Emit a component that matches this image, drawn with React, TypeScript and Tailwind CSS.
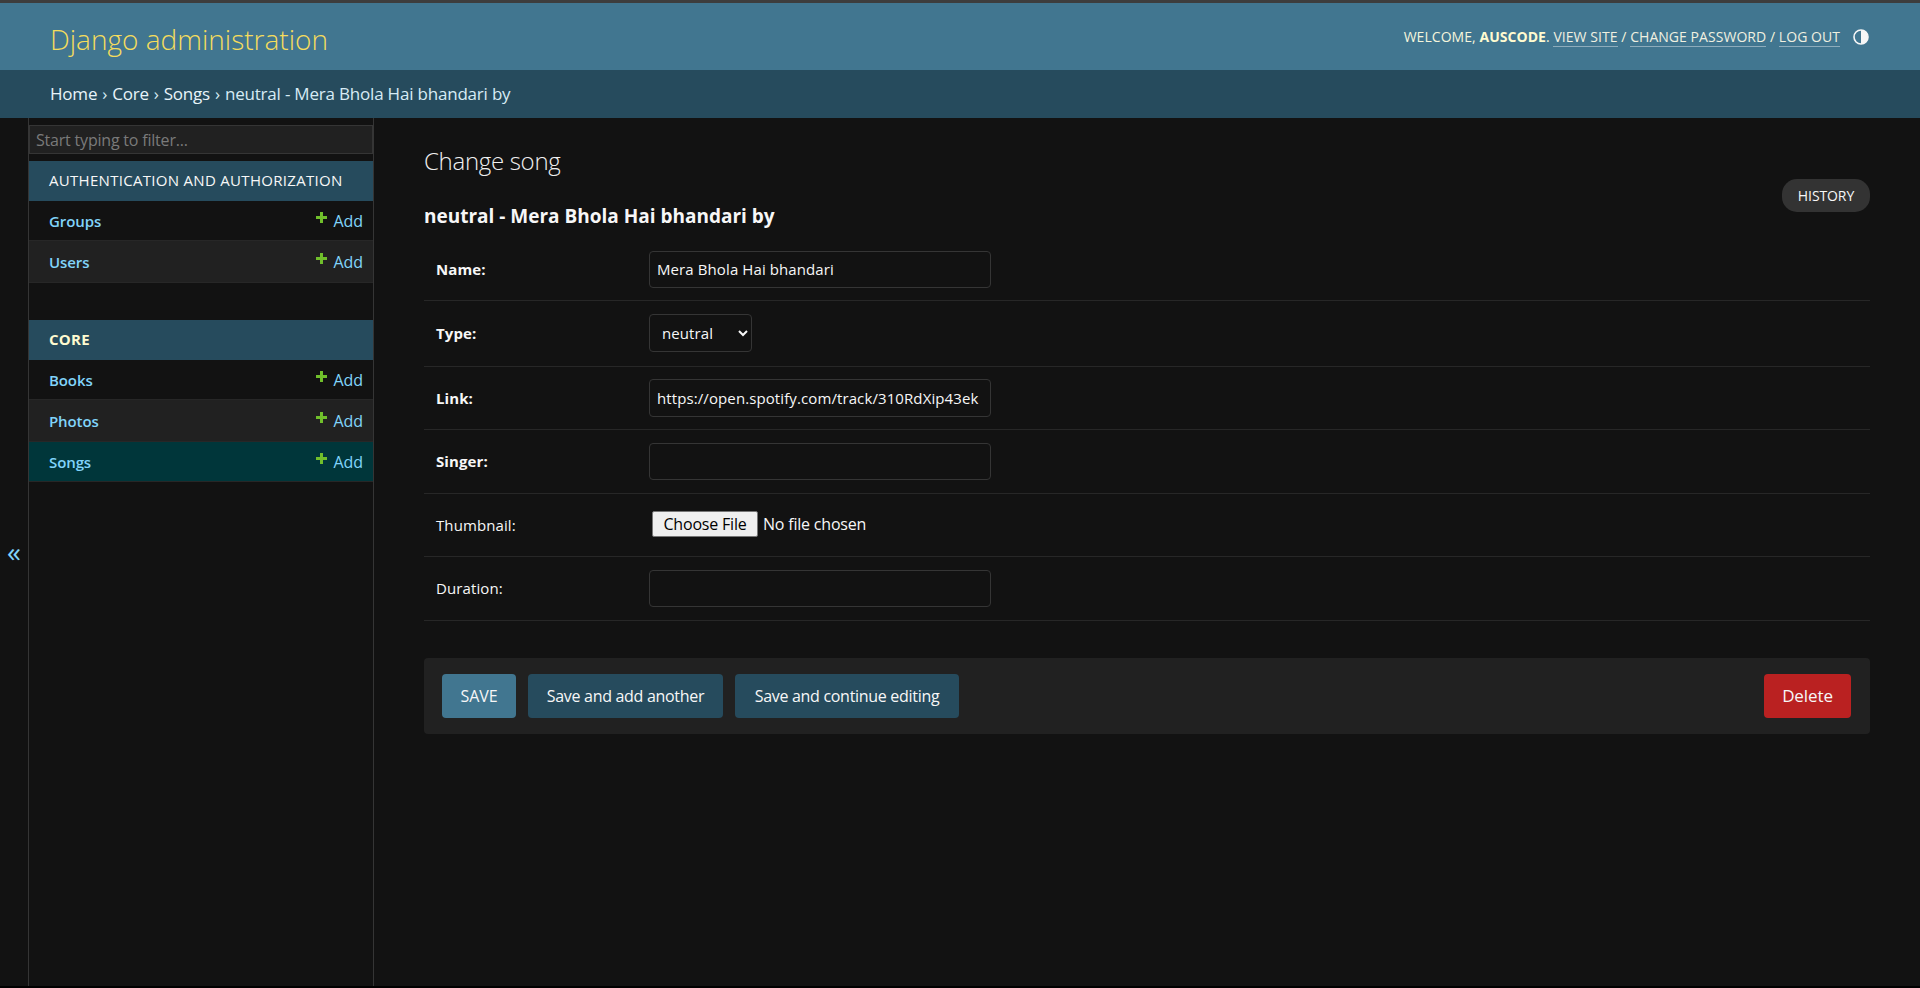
import React from 'react'

const font = { fontFamily: '"Open Sans", "Noto Sans", sans-serif' }

type ModelGroup = { title: string; bold?: boolean; models: { name: string; tall?: boolean; selected?: boolean; alt?: boolean }[] }

const groups: ModelGroup[] = [
  {
    title: 'Authentication and Authorization',
    models: [{ name: 'Groups' }, { name: 'Users', alt: true, tall: true }],
  },
  {
    title: 'Core',
    bold: true,
    models: [{ name: 'Books' }, { name: 'Photos', alt: true, tall: true }, { name: 'Songs', selected: true }],
  },
]

function PlusIcon() {
  return (
    <svg viewBox="0 0 13 13" className="w-[13px] h-[13px] mb-[6px]">
      <path d="M5 1h3v4h4v3H8v4H5V8H1V5h4z" fill="#70bf2b" />
    </svg>
  )
}

function Sidebar() {
  return (
    <div className="w-[345px] shrink-0 border-r border-[#353535] pt-[7px]">
      <input
        placeholder="Start typing to filter..."
        readOnly
        className="block w-full h-[29px] px-[6px] bg-[#212121] border border-[#353535] text-[16px] tracking-[-0.2px] text-white placeholder:text-[#7a7a7a] outline-none"
      />
      {groups.map((group, i) => (
        <div key={group.title} className={i === 0 ? 'mt-[7px] mb-[37px]' : ''}>
          <div className={`h-[40px] flex items-center px-[20px] pb-[2px] bg-[#264b5d] text-[15px] uppercase tracking-[0.3px] ${group.bold ? 'font-bold text-[#fffbd0]' : 'text-[#f7f7f7]'}`}>
            {group.title}
          </div>
          {group.models.map((m) => (
            <div
              key={m.name}
              className={`flex items-center justify-between pl-[20px] pr-[10px] border-b border-[#272727] ${m.tall ? 'h-[42px]' : 'h-[40px]'} ${m.alt ? 'bg-[#212121]' : ''} ${m.selected ? 'bg-[#00363a]' : ''}`}
            >
              <a className="text-[15px] font-semibold tracking-[-0.1px] text-[#81d4fa] pt-[1px]">{m.name}</a>
              <span className="flex items-center gap-[6px] text-[16px] tracking-[-0.1px] text-[#81d4fa]">
                <PlusIcon />
                Add
              </span>
            </div>
          ))}
        </div>
      ))}
    </div>
  )
}

function TextRow({ label, value, bold, h, inputH = 'h-[37px]' }: { label: string; value?: string; bold?: boolean; h: string; inputH?: string }) {
  return (
    <div className={`flex items-center border-b border-[#272727] pl-[12px] ${h}`}>
      <label className={`w-[213px] shrink-0 text-[15px] text-[#f7f7f7] tracking-[0.1px] ${bold ? 'font-bold' : ''}`}>{label}</label>
      <input
        readOnly
        value={value ?? ''}
        className={`w-[342px] ${inputH} px-[7px] rounded-[4px] bg-[#121212] border border-[#353535] text-[15px] tracking-[0.1px] text-[#f7f7f7] outline-none`}
      />
    </div>
  )
}

export default function App() {
  return (
    <div className="min-h-screen bg-black text-white" style={font}>
      <div className="h-[986px] flex flex-col bg-[#121212]">
        {/* Header */}
        <div className="h-[70px] shrink-0 border-t-[3px] border-[#3d3d3d] bg-[#417690] flex items-center justify-between pl-[50px] pr-[51px]">
          <div className="text-[28px] font-light text-[#f5dd5d] leading-none pt-[5px]">Django administration</div>
          <div className="flex items-center text-[14px] uppercase tracking-[0.05px] text-[#f5f5dc]">
            <span className="pb-[1px]">
              Welcome, <strong className="font-bold text-[#fffbd0]">Auscode</strong>.{' '}
              <a className="border-b border-white/40 text-[#f0f0e0]">View site</a> / <a className="border-b border-white/40 text-[#f0f0e0]">Change password</a> /{' '}
              <a className="border-b border-white/40 text-[#f0f0e0]">Log out</a>
            </span>
            <svg viewBox="0 0 16 16" className="w-[16px] h-[16px] ml-[13px]">
              <circle cx="8" cy="8" r="7" fill="none" stroke="#f7f7f7" strokeWidth="1.6" />
              <path d="M8 1a7 7 0 0 1 0 14z" fill="#f7f7f7" />
            </svg>
          </div>
        </div>

        {/* Breadcrumbs */}
        <div className="h-[48px] shrink-0 bg-[#264b5d] flex items-center pl-[50px] text-[17px] tracking-[-0.2px] text-[#d7ecf5]">
          <span className="text-[#e8f4fa]">Home</span>
          <span className="mx-[5px]">›</span>
          <span className="text-[#e8f4fa]">Core</span>
          <span className="mx-[5px]">›</span>
          <span className="text-[#e8f4fa]">Songs</span>
          <span className="mx-[5px]">›</span>
          neutral - Mera Bhola Hai bhandari by
        </div>

        <div className="flex flex-1 min-h-0">
          {/* Nav toggle */}
          <div className="w-[29px] shrink-0 border-r border-[#353535] flex items-center justify-center">
            <span className="text-[28px] leading-none text-[#81d4fa] pb-[3px]">«</span>
          </div>
          <Sidebar />

          {/* Content */}
          <div className="flex-1 pl-[50px] pr-[50px] pt-[27px]">
            <h1 className="text-[24px] font-light tracking-[-0.3px] leading-[32px] text-[#f0f0f0]">Change song</h1>
            <div className="flex justify-end mt-[2px]">
              <a className="h-[33px] w-[88px] flex items-center justify-center rounded-[15px] bg-[#333333] text-[14px] uppercase tracking-[-0.1px] text-[#f7f7f7]">History</a>
            </div>
            <h2 className="-mt-[8px] text-[19px] font-bold leading-[24px] text-[#f7f7f7]">neutral - Mera Bhola Hai bhandari by</h2>

            <div className="mt-[10px]">
              <TextRow label="Name:" value="Mera Bhola Hai bhandari" bold h="h-[63px]" />
              <div className="flex items-center border-b border-[#272727] pl-[12px] h-[66px]">
                <label className="w-[213px] shrink-0 text-[15px] font-bold text-[#f7f7f7] tracking-[0.1px]">Type:</label>
                <select className="w-[103px] h-[38px] -mt-[2px] pl-[8px] rounded-[4px] bg-[#121212] border border-[#353535] text-[15px] tracking-[0.1px] text-[#f7f7f7] [color-scheme:dark] outline-none appearance-auto">
                  <option>neutral</option>
                </select>
              </div>
              <TextRow label="Link:" value="https://open.spotify.com/track/310RdXip43ek" bold h="h-[63px]" inputH="h-[38px]" />
              <TextRow label="Singer:" bold h="h-[64px]" />
              <div className="flex items-center border-b border-[#272727] pl-[12px] h-[63px]">
                <label className="w-[213px] shrink-0 text-[15px] text-[#f7f7f7] tracking-[0.1px]">Thumbnail:</label>
                <input
                  type="file"
                  className="ml-[3px] mb-[2px] text-[16px] tracking-[-0.2px] text-[#f7f7f7] file:h-[26px] file:w-[106px] file:bg-[#efefef] file:text-black file:border file:border-[#767676] file:rounded-[2px] file:mr-[5px] file:text-[16px]"
                />
              </div>
              <TextRow label="Duration:" h="h-[64px]" />
            </div>

            {/* Submit row */}
            <div className="mt-[37px] h-[76px] rounded-[4px] bg-[#212121] flex items-center justify-between pl-[18px] pr-[19px]">
              <div className="flex gap-[12px]">
                <button className="h-[44px] w-[74px] rounded-[4px] bg-[#417690] text-[16px] uppercase tracking-[-0.1px] text-[#f7f7f7]">Save</button>
                <button className="h-[44px] w-[195px] rounded-[4px] bg-[#264b5d] text-[16px] tracking-[-0.3px] text-[#f7f7f7]">Save and add another</button>
                <button className="h-[44px] w-[224px] rounded-[4px] bg-[#264b5d] text-[16px] tracking-[-0.3px] text-[#f7f7f7]">Save and continue editing</button>
              </div>
              <a className="h-[44px] w-[87px] flex items-center justify-center rounded-[4px] bg-[#ba2121] text-[17px] tracking-[-0.1px] text-[#f7f7f7]">Delete</a>
            </div>
          </div>
        </div>
      </div>
    </div>
  )
}
